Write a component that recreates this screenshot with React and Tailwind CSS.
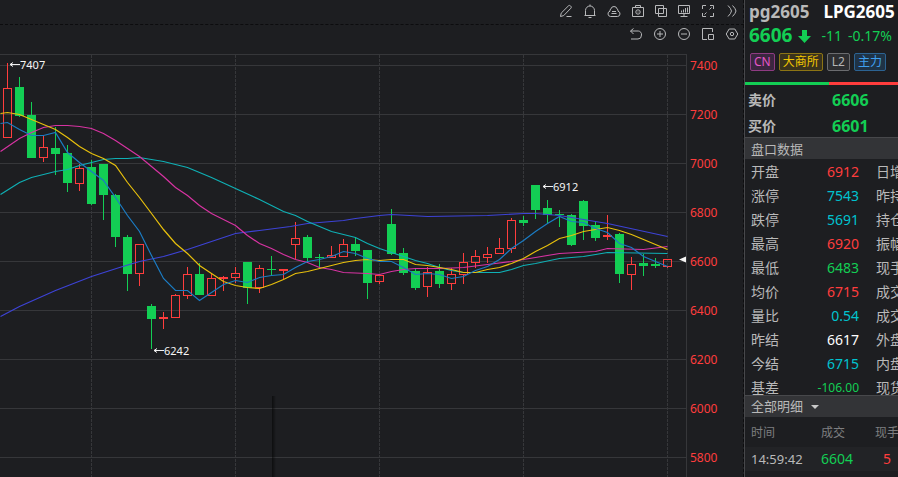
import { useState } from 'react';

// Cada vela: [direção, máxima, topo do corpo, base do corpo, mínima], em unidades do gráfico
const CANDLES = [
    ['up', 63, 88, 138, 138], ['down', 77, 87, 116, 117], ['down', 102, 115, 158, 158], ['up', 135, 147, 158, 162],
    ['down', 127, 148, 154, 175], ['down', 145, 153, 183, 192], ['up', 164, 168, 184, 191], ['down', 160, 167, 204, 205],
    ['down', 164, 164, 195, 220], ['down', 194, 195, 237, 247], ['down', 235, 237, 274, 291], ['up', 244, 244, 274, 286],
    ['down', 304, 306, 319, 349], ['up', 312, 317, 319, 329], ['up', 294, 295, 318, 318], ['up', 267, 274, 296, 299],
    ['down', 263, 274, 295, 295], ['up', 273, 278, 296, 296], ['up', 276, 277, 279, 291], ['up', 267, 273, 278, 283],
    ['down', 262, 262, 288, 304], ['up', 265, 268, 288, 293], ['down', 256, 269, 270, 275], ['up', 269, 269, 271, 279],
    ['up', 222, 238, 245, 259], ['down', 235, 237, 258, 262], ['down', 254, 257, 258, 268], ['up', 246, 255, 258, 258],
    ['up', 239, 244, 257, 257], ['down', 237, 244, 251, 256], ['down', 250, 250, 283, 299], ['up', 275, 275, 282, 284],
    ['down', 209, 224, 254, 255], ['down', 248, 253, 273, 275], ['down', 269, 271, 288, 290], ['up', 267, 272, 287, 297],
    ['down', 264, 271, 284, 288], ['up', 268, 274, 284, 290], ['up', 253, 262, 275, 284], ['up', 250, 256, 263, 268],
    ['up', 247, 254, 258, 263], ['up', 238, 248, 254, 254], ['up', 218, 220, 249, 253], ['down', 216, 220, 223, 226],
    ['down', 185, 185, 210, 219], ['down', 200, 208, 215, 224], ['down', 210, 214, 215, 227], ['down', 214, 215, 245, 246],
    ['down', 200, 201, 226, 240], ['down', 221, 225, 238, 241], ['up', 215, 235, 237, 240], ['down', 233, 234, 274, 283],
    ['up', 257, 264, 275, 290], ['down', 254, 263, 266, 276], ['down', 258, 264, 266, 268], ['up', 259, 259, 267, 268],
];

const AVERAGES = [
    { color: '#3d43d6', points: '0,316 19,306 55,290 91,276 119,267 139,261 163,256 187,249 211,241 235,233 259,230 290,226 307,223 343,220 355,218 379,215 391,214 427,216 487,215 523,213 535,213 559,215 583,219 607,223 667,236' },
    { color: '#0fb0b5', points: '0,194 19,182 31,177 43,174 55,171 67,169 79,165 91,162 103,159 115,158 127,158 139,157 163,161 187,167 211,177 235,188 259,199 271,205 283,211 295,215 307,221 319,226 331,231 343,234 355,237 367,243 379,248 391,252 403,256 415,260 427,263 439,267 451,270 463,272 499,272 511,269 523,265 535,263 559,258 583,256 607,252 667,253' },
    { color: '#d733a2', points: '0,151 19,138 31,132 43,127 55,125 67,125 79,126 91,128 103,133 115,140 127,148 139,156 151,166 163,176 175,187 187,195 199,205 211,213 223,219 235,225 247,235 259,243 271,248 283,254 295,259 307,262 319,267 331,269 343,272 367,273 379,274 391,271 403,269 415,268 439,268 463,267 487,264 511,261 523,259 535,257 559,253 595,251 607,248 643,249 667,246' },
    { color: '#e8c00c', points: '0,113 7,112 19,114 31,119 43,124 55,129 67,137 79,146 91,153 103,158 115,165 127,182 139,197 151,213 163,229 175,243 187,253 199,265 211,273 223,281 235,285 247,287 259,288 271,284 283,279 295,273 307,271 319,268 331,265 343,262 355,260 367,259 379,260 391,259 403,259 415,264 427,265 439,267 451,269 463,272 475,272 487,269 499,267 511,263 523,258 535,251 547,245 559,238 571,235 583,231 595,229 607,227 619,230 631,234 643,239 655,244 667,249' },
    { color: '#1b7cc4', points: '0,123 7,122 19,129 31,135 43,135 55,132 67,152 79,162 91,171 103,180 115,197 127,215 139,231 151,255 163,278 175,290 187,290 199,300 211,292 223,284 235,280 247,282 259,277 271,275 283,274 295,267 307,261 319,259 331,256 343,251 355,253 367,258 379,261 391,261 403,267 415,274 427,273 439,274 451,278 463,276 475,270 487,266 499,259 511,248 523,240 535,231 547,223 559,216 571,221 583,222 595,228 607,232 619,243 631,247 643,256 655,261 667,266' },
];

const PRICES = [7400, 7200, 7000, 6800, 6600, 6400, 6200, 6000, 5800];
const MONTHS = [91, 235, 379, 523, 667];

const QUOTES = [
    ['开盘', '6912', 'text-[#ff3d3d]', '日增'],
    ['涨停', '7543', 'text-[#00c3cf]', '昨持'],
    ['跌停', '5691', 'text-[#00c3cf]', '持仓'],
    ['最高', '6920', 'text-[#ff3d3d]', '振幅'],
    ['最低', '6483', 'text-[#13ce54]', '现手'],
    ['均价', '6715', 'text-[#ff3d3d]', '成交'],
    ['量比', '0.54', 'text-[#00c3cf]', '成交'],
    ['昨结', '6617', 'text-white', '外盘'],
    ['今结', '6715', 'text-[#00c3cf]', '内盘'],
    ['基差', '-106.00', 'text-xs text-[#13ce54]', '现货'],
];

const TAGS = [
    { label: 'CN', style: 'px-[3px] border-[#8e3b82] bg-[#3b2640] text-[#e356c8]' },
    { label: '大商所', style: 'px-[3px] border-[#8c7414] bg-[#3a331d] text-[#f2c600]' },
    { label: 'L2', style: 'px-1 border-[#6b6c6f] bg-[#2d2e31] text-[#b4b4b4]' },
    { label: '主力', style: 'px-[3px] border-[#2c6392] bg-[#1f3346] text-[#3fa0f0]' },
];

function Icon({ children }) {
    return (
        <svg viewBox="0 0 16 16" className="h-4 w-4 fill-none stroke-[#b8b9bb] stroke-1" aria-hidden="true">
            {children}
        </svg>
    );
}

const TOP_TOOLS = [
    { name: '画线', width: 'w-6', icon: <path d="M2.5 13.5l.7-3.4L10.5 2.8q1-.8 1.9 0l.5.5q.8 1 0 1.9L5.7 12.6zM8.500 13.5h5" /> },
    { name: '预警', width: 'w-6', icon: <path d="M2.5 12.5h11M3.5 12.5V7.5a4.500 4.500 0 0 1 9 0v5M8 3V1.500M6.500 14.500h3" /> },
    { name: '云端', width: 'w-6', icon: <path d="M4.500 13.500a2.700 2.700 0 0 1-.5-5.300 2 2 0 0 1 .8-2.200 3.300 3.300 0 0 1 6.400 0 2 2 0 0 1 .8 2.200 2.700 2.700 0 0 1-.5 5.300zM6 8.500h4M5.500 10.500h5" /> },
    { name: '截图', width: 'w-6', icon: <><path d="M2.500 4.500h11v9h-11zM5.500 4V2.500h5V4" /><circle cx="8" cy="9" r="2.200" /><path d="M8 8.500v1" /></> },
    { name: '叠加', width: 'w-[22px]', icon: <path d="M2.500 2.500h8v8h-8zM5.500 5.500h8v8h-8z" /> },
    { name: '看盘', width: 'w-6', icon: <><path d="M2.500 2.500h11v8h-11zM4.500 13.500h7" /><path d="M5.500 9.500v-2M7.500 9.500v-3M9.500 9.500V5M11.500 9.500V4.500M8 10.500v3" /></> },
    { name: '全屏', width: 'w-6', icon: <path d="M2.500 6V2.500H6M10 2.500h3.500V6M13.500 10v3.500H10M6 13.500H2.500V10M9.500 6.500l2-2M6.500 9.500l-2 2" /> },
    { name: '展开', width: 'w-6', icon: <path d="M4 2.500q3 3 3.500 5.500-.5 2.500-3.500 5.500M8.500 2.500q3 3 3.500 5.500-.5 2.500-3.500 5.500" /> },
];

const CHART_TOOLS = [
    { name: '撤销', icon: <path d="M5.500 2.500L2.500 5l3 3M2.500 5h7.800a3.500 3.500 0 0 1 3.200 4q0 4-3.500 4H3" /> },
    { name: '放大', icon: <><circle cx="8" cy="8" r="5.500" /><path d="M5 8h6M8 5v6" /></> },
    { name: '缩小', icon: <><circle cx="8" cy="8" r="5.500" /><path d="M5 8h6" /></> },
    { name: '区间', icon: <path d="M7 13.500H2.500v-11h10V6M8.500 8.500h5v5h-5z" /> },
    { name: '设置', icon: <><path d="M5.200 3h5.600l3 5-3 5H5.200l-3-5z" /><circle cx="8" cy="8" r="1.700" /></> },
];

function Candle({ index, data }) {
    const [dir, high, top, bottom, low] = data;
    const x = 7 + index * 12;
    if (dir === 'down') {
        return (
            <g fill="#13ce54">
                <rect x={x} y={high} width="1" height={low - high} />
                <rect x={x - 4} y={top} width="9" height={bottom - top} />
            </g>
        );
    }
    return (
        <g fill="#ff3d3d">
            <rect x={x} y={high} width="1" height={top - high} />
            <rect x={x} y={bottom} width="1" height={low - bottom} />
            {bottom - top > 2 ? (
                <path fillRule="evenodd" d={`M${x - 4} ${top}h9v${bottom - top}h-9zM${x - 3} ${top + 1}v${bottom - top - 2}h7v${2 - bottom + top}z`} />
            ) : (
                <rect x={x - 4} y={top} width="9" height={bottom - top} />
            )}
        </g>
    );
}

function Mark({ x, y, value }) {
    return (
        <g>
            <path d={`M${x} ${y}h10M${x + 3} ${y - 2}L${x} ${y}l3 2`} fill="none" stroke="#f0f0f0" />
            <text x={x + 10} y={y + 4.5} fontSize="11" fill="#f5f5f5">{value}</text>
        </g>
    );
}

function Chart() {
    return (
        <svg viewBox="0 46 743 431" className="block h-auto w-full" role="img" aria-label="LPG2605 K线">
            <defs>
                <linearGradient id="edge">
                    <stop offset="0" stopColor="#000" stopOpacity="0.550" />
                    <stop offset="1" stopColor="#000" stopOpacity="0" />
                </linearGradient>
            </defs>
            <g stroke="#36373a" shapeRendering="crispEdges">
                <path d="M0 54.500h686.500V477" fill="none" />
                {PRICES.map((price, i) => <path key={price} d={`M0 ${65.5 + i * 49}h686`} />)}
                {MONTHS.map((x) => <path key={x} d={`M${x + 0.5} 55v422`} strokeDasharray="3 1" />)}
            </g>
            <g shapeRendering="crispEdges">
                {CANDLES.map((data, i) => <Candle key={i} index={i} data={data} />)}
            </g>
            {AVERAGES.map((line) => (
                <polyline key={line.color} points={line.points} fill="none" stroke={line.color} strokeWidth="1.200" transform="translate(0.5 0.5)" />
            ))}
            <rect x="272" y="396" width="4" height="81" fill="url(#edge)" />
            <Mark x={10} y={64.5} value="7407" />
            <Mark x={154} y={350.5} value="6242" />
            <Mark x={543} y={186.5} value="6912" />
            <path d="M679 259.500l7-3v6z" fill="#f5f5f5" />
            <g fontSize="12" fill="#ff3d3d">
                {PRICES.map((price, i) => <text key={price} x="690" y={70 + i * 49}>{price}</text>)}
            </g>
        </svg>
    );
}

export default function App() {
    const [detailOpen, setDetailOpen] = useState(true);

    return (
        <div className="flex min-h-screen overflow-hidden bg-[#1d1e21] font-['Noto_Sans','Noto_Sans_CJK_SC',sans-serif] text-sm text-[#b9b9b9]">
            <main className="min-w-0 flex-1 border-r border-dashed border-[#0c0c0e]">
                <div className="-mr-px flex h-[25px] items-center justify-end border-b border-dashed border-[#0c0c0e] pb-[2px]">
                    {TOP_TOOLS.map((tool) => (
                        <button key={tool.name} aria-label={tool.name} className={`flex shrink-0 justify-center ${tool.width}`}>
                            <Icon>{tool.icon}</Icon>
                        </button>
                    ))}
                </div>
                <div className="-mr-px flex h-[21px] items-center justify-end pb-[3px]">
                    {CHART_TOOLS.map((tool) => (
                        <button key={tool.name} aria-label={tool.name} className="flex w-6 shrink-0 justify-center">
                            <Icon>{tool.icon}</Icon>
                        </button>
                    ))}
                </div>
                <Chart />
            </main>

            <aside className="w-[154px] shrink-0 overflow-hidden whitespace-nowrap border-l border-[#47484b]">
                <header className="h-[82px] pl-1">
                    <h1 className="flex h-6 items-center gap-[14px] text-[17px] font-bold">
                        <span>pg2605</span>
                        <span className="text-white">LPG2605</span>
                    </h1>
                    <div className="flex h-6 items-center text-[#13ce54]">
                        <strong className="text-[19px]">6606</strong>
                        <svg viewBox="0 0 13 13" className="mx-[6px] h-[13px] w-[13px] shrink-0" aria-hidden="true">
                            <path d="M4 0h5v6h4l-6.500 7L0 6h4z" fill="#13ce54" />
                        </svg>
                        <span className="ml-1">-11</span>
                        <span className="ml-[6px]">-0.17%</span>
                    </div>
                    <div className="flex gap-1 pt-[5px] pl-px">
                        {TAGS.map((tag) => (
                            <span key={tag.label} className={`flex h-[18px] items-center rounded-xs border text-xs ${tag.style}`}>{tag.label}</span>
                        ))}
                    </div>
                </header>
                <div className="flex h-[3px]">
                    <div className="w-[84px] bg-[#13ce54]" />
                    <div className="flex-1 bg-[#ff3d3d]" />
                </div>

                <dl className="grid h-[52px] grid-cols-[84px_auto] pt-[2px] pl-[3px] leading-[26px] font-bold">
                    <dt>卖价</dt>
                    <dd className="text-base leading-[26px] text-[#13ce54]">6606</dd>
                    <dt>买价</dt>
                    <dd className="text-base leading-[26px] text-[#13ce54]">6601</dd>
                </dl>

                <h2 className="h-[22px] border-t border-[#47484b] bg-[#333437] pl-[6px] text-[13px] leading-[22px]">盘口数据</h2>
                <div className="h-[236px] overflow-hidden pt-px">
                    <table className="w-[156px] table-fixed">
                        <tbody>
                            {QUOTES.map(([label, value, color, other]) => (
                                <tr key={label} className="h-6 leading-6">
                                    <th scope="row" className="w-12 p-0 pl-[6px] text-left font-normal">{label}</th>
                                    <td className={`w-[66px] p-0 text-right leading-6 ${color}`}>{value}</td>
                                    <th scope="row" className="p-0 pl-[17px] text-left font-normal">{other}</th>
                                </tr>
                            ))}
                        </tbody>
                    </table>
                </div>

                <button
                    onClick={() => setDetailOpen(!detailOpen)}
                    className="flex h-[22px] w-full items-center gap-2 border-t border-[#47484b] bg-[#333437] pl-[6px] text-[13px]"
                >
                    全部明细
                    <svg viewBox="0 0 8 4" className="h-1 w-2" aria-hidden="true">
                        <path d="M0 0h8L4 4z" fill="#c8c8c8" />
                    </svg>
                </button>
                {detailOpen && (
                    <table className="w-[156px] table-fixed text-left">
                        <thead>
                            <tr className="h-[30px] text-xs text-[#7d7e80]">
                                <th className="w-[76px] p-0 pt-[2px] pl-[6px] font-normal">时间</th>
                                <th className="w-[54px] p-0 pt-[2px] font-normal">成交</th>
                                <th className="p-0 pt-[2px] font-normal">现手</th>
                            </tr>
                        </thead>
                        <tbody>
                            <tr className="h-6 bg-[#222326]">
                                <td className="p-0 pl-[6px] text-[13px]">14:59:42</td>
                                <td className="p-0 text-[#13ce54]">6604</td>
                                <td className="p-0 pl-2 text-[#ff3d3d]">5</td>
                            </tr>
                        </tbody>
                    </table>
                )}
            </aside>
        </div>
    );
}
